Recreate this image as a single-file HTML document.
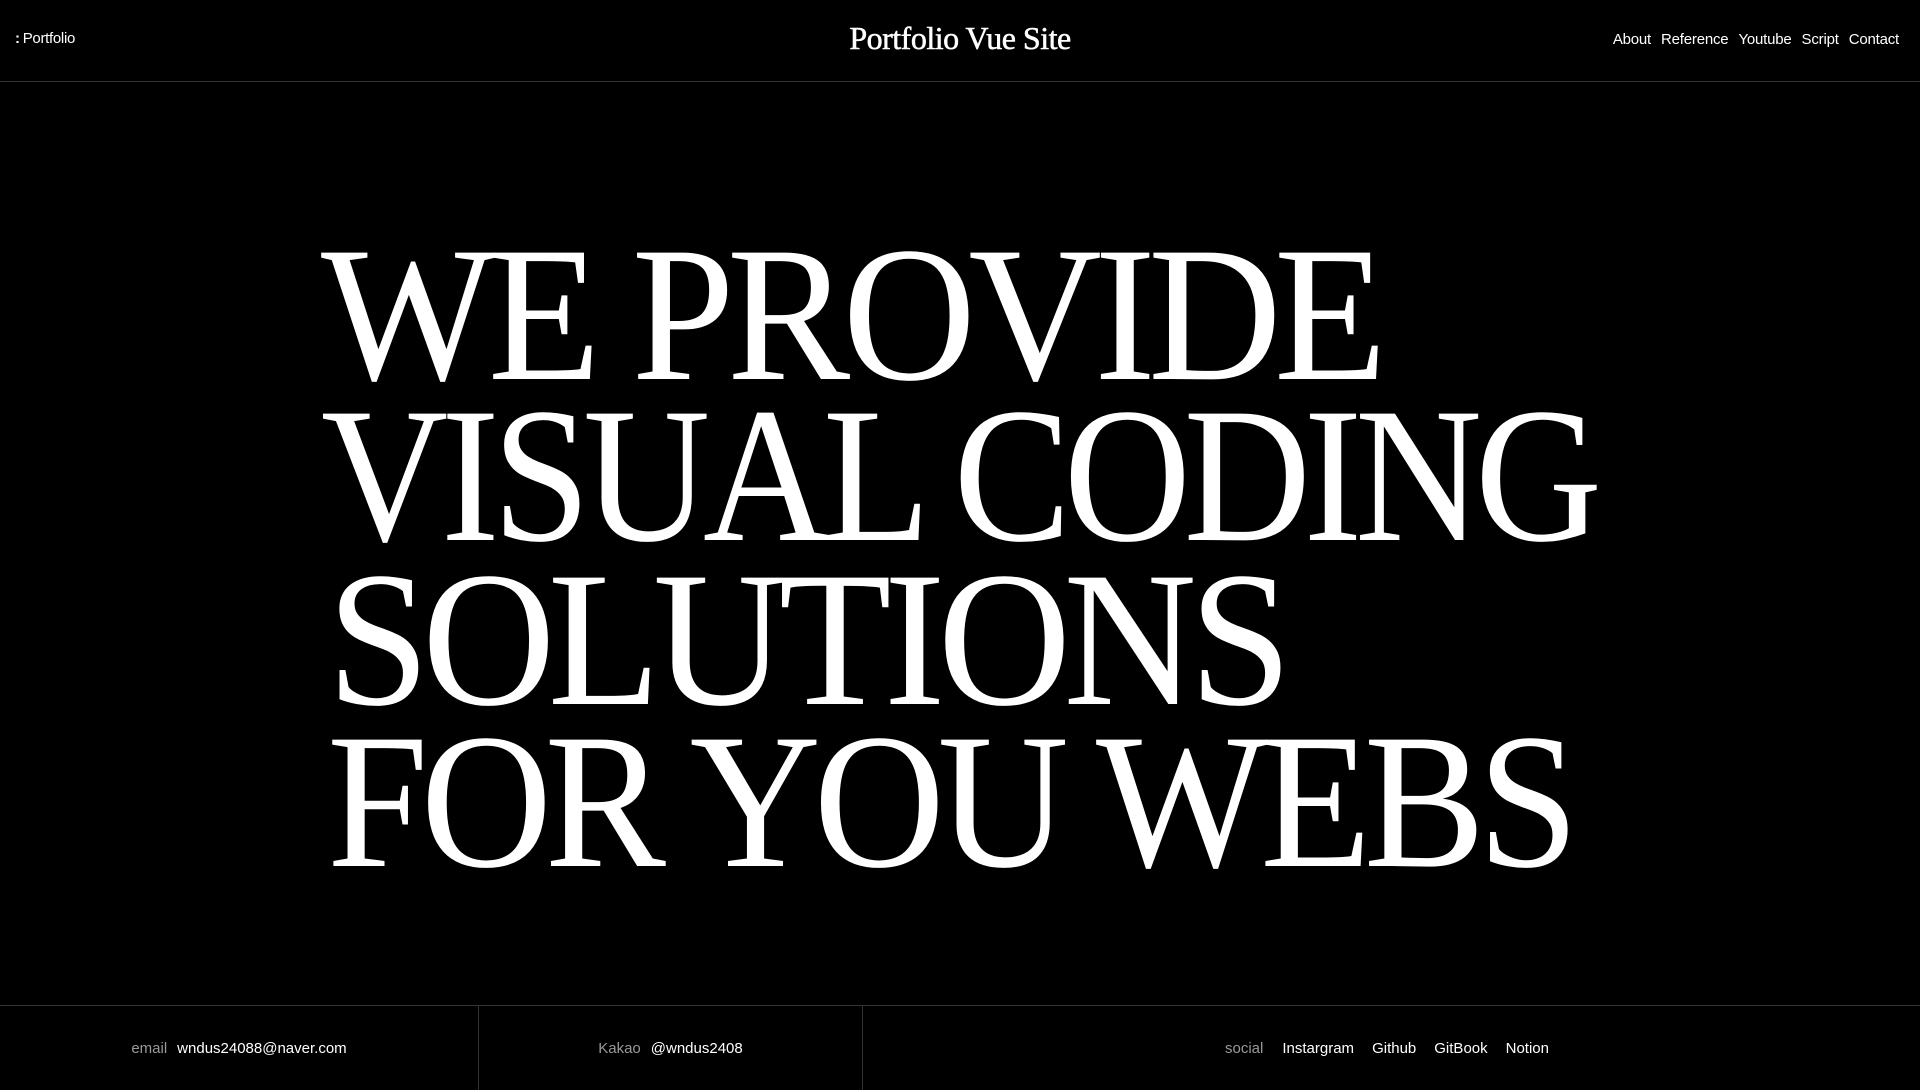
<!DOCTYPE html>
<html><head><meta charset="utf-8"><style>
*{margin:0;padding:0;box-sizing:border-box}
html,body{width:1920px;height:1089px;background:#000;color:#fff;overflow:hidden;font-family:"Liberation Sans",sans-serif}
header{position:absolute;left:0;top:0;width:1920px;height:82px;border-bottom:1px solid #333}
.logo{position:absolute;left:15px;top:30px;font-size:15px;letter-spacing:-0.3px}
.logo:before{content:":";font-weight:bold;margin-right:3px}
.title{position:absolute;left:0;width:1920px;text-align:center;top:20px;font-family:"Liberation Serif",serif;font-size:32px;letter-spacing:-0.5px;-webkit-text-stroke:0.5px #fff}
nav{position:absolute;right:21px;top:31px;font-size:15px;letter-spacing:-0.2px}
nav span{margin-left:10px}
.l{position:absolute;font-family:"Liberation Serif",serif;font-size:193px;line-height:193px;letter-spacing:-8px;white-space:nowrap;transform-origin:0 0}
footer{position:absolute;left:0;top:1005px;width:1920px;height:84px;border-top:1px solid #333;font-size:15px}
.c{position:absolute;top:0;height:84px;display:flex;align-items:center;justify-content:center}
.c b{font-weight:normal;color:#999;margin-right:10px}
.c i{font-style:normal;margin:0 9px}
</style></head><body>
<header>
<div class="logo">Portfolio</div>
<div class="title">Portfolio Vue Site</div>
<nav><span>About</span><span>Reference</span><span>Youtube</span><span>Script</span><span>Contact</span></nav>
</header>
<div class="l" style="left:321px;top:218px;transform:scaleX(0.958)">WE PROVIDE</div>
<div class="l" style="left:321px;top:379px;transform:scaleX(0.913)">VISUAL CODING</div>
<div class="l" style="left:327px;top:543px;transform:scaleX(0.957)">SOLUTIONS</div>
<div class="l" style="left:327px;top:705px;transform:scaleX(0.943)">FOR YOU WEBS</div>
<footer>
<div class="c" style="left:0;width:479px;border-right:1px solid #333"><b>email</b>wndus24088@naver.com</div>
<div class="c" style="left:479px;width:384px;border-right:1px solid #333"><b>Kakao</b>@wndus2408</div>
<div class="c" style="left:863px;width:1057px"><b>social</b><i>Instargram</i><i>Github</i><i>GitBook</i><i>Notion</i></div>
</footer>
</body></html>
